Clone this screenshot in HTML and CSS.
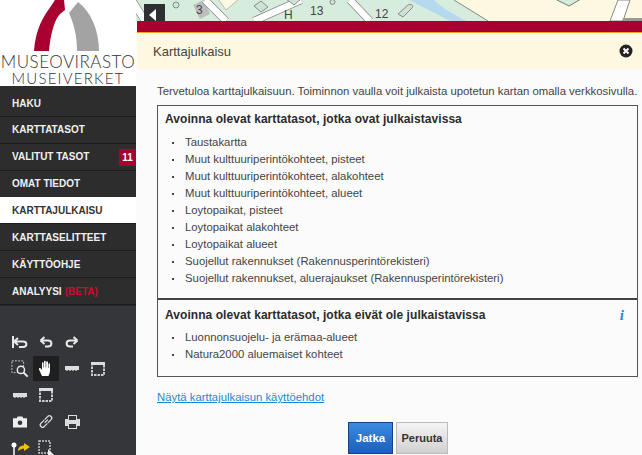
FILE: index.html
```html
<!DOCTYPE html>
<html lang="fi">
<head>
    <meta charset="UTF-8">
    <title>Karttajulkaisu</title>
    <link rel="stylesheet" href="styles.css">
</head>
<body>
    <div class="app">
        <aside class="sidebar">
            <div class="logo">
                <svg class="logo-mark" width="136" height="53" viewBox="0 0 136 53">
                    <path fill="#a8002f" d="M34 51C35 35 40 21 49 9L55 0H64L65 10L60 14L57 18C52 28 50 40 49 51Z"/>
                    <path fill="#a3a3a3" d="M69 13L78 2C91 12 99 30 99 51H77C77 36 74 24 69 13Z"/>
                </svg>
                <div class="logo-name">MUSEOVIRASTO</div>
                <div class="logo-sub">MUSEIVERKET</div>
            </div>
            <nav class="menu">
                <a class="menu-item">HAKU</a>
                <a class="menu-item">KARTTATASOT</a>
                <a class="menu-item">VALITUT TASOT<span class="badge">11</span></a>
                <a class="menu-item">OMAT TIEDOT</a>
                <a class="menu-item active">KARTTAJULKAISU</a>
                <a class="menu-item">KARTTASELITTEET</a>
                <a class="menu-item">KÄYTTÖOHJE</a>
                <a class="menu-item">ANALYYSI <span class="beta">(BETA)</span></a>
            </nav>
            <div class="tools">
                <div class="tool-row">
                    <span class="tool"><svg width="16" height="14" viewBox="0 0 16 14"><path d="M1 1V13M2 6.500H11C15.500 6.500 15.500 12 11 12H7M2 6.500L6 3M2 6.500L6 10" fill="none" stroke="#e8e8e8" stroke-width="2"/></svg></span>
                    <span class="tool"><svg width="14" height="12" viewBox="0 0 14 12"><path d="M2 4.500H9C13.500 4.500 13.500 10.500 9 10.500H6M1.500 4.500L5.500 1M1.500 4.500L5.500 8" fill="none" stroke="#e8e8e8" stroke-width="2"/></svg></span>
                    <span class="tool"><svg width="14" height="12" viewBox="0 0 14 12"><path d="M12 4.500H5C0.500 4.500 0.500 10.500 5 10.500H8M12.500 4.500L8.500 1M12.500 4.500L8.500 8" fill="none" stroke="#e8e8e8" stroke-width="2"/></svg></span>
                </div>
                <div class="tool-row">
                    <span class="tool"><svg width="18" height="18" viewBox="0 0 20 20"><rect x="1" y="1" width="13" height="13" fill="none" stroke="#ddd" stroke-dasharray="2 1.500"/><circle cx="11" cy="11" r="4" fill="#35363a" stroke="#eee" stroke-width="1.600"/><path d="M14 14L18.500 18.500" stroke="#eee" stroke-width="2.200"/></svg></span>
                    <span class="tool on"><svg width="16" height="17" viewBox="0 0 16 17"><path fill="#fff" d="M4 16L1 9.500C.5 8 2 7.500 3 8.500L4 10V3C4 2 5.500 2 5.500 3V7.500H6V1.500C6 .5 7.700 .5 7.700 1.500V7.500H8.200V2C8.200 1 10 1 10 2V8H10.500V4C10.500 3 12 3 12 4V10.500C12 13 11 14.500 10.500 16Z"/></svg></span>
                    <span class="tool"><svg width="14" height="5" viewBox="0 0 14 5"><path fill="#ddd" d="M0 0H14V4H0Z"/><path d="M1 4.500H13" stroke="#999" stroke-dasharray="2 1"/></svg></span>
                    <span class="tool"><svg width="14" height="14" viewBox="0 0 14 14"><rect x="1" y="1" width="12" height="12" fill="none" stroke="#ccc" stroke-width="2" stroke-dasharray="2.500 1"/><path d="M0 0H14V3H0Z" fill="#ddd"/></svg></span>
                </div>
                <div class="tool-row">
                    <span class="tool"><svg width="14" height="5" viewBox="0 0 14 5"><path fill="#ddd" d="M0 0H14V4H0Z"/><path d="M1 4.500H13" stroke="#999" stroke-dasharray="2 1"/></svg></span>
                    <span class="tool"><svg width="14" height="14" viewBox="0 0 14 14"><rect x="1" y="1" width="12" height="12" fill="none" stroke="#ccc" stroke-width="2" stroke-dasharray="2.500 1"/><path d="M0 0H14V3H0Z" fill="#ddd"/></svg></span>
                </div>
                <div class="tool-row">
                    <span class="tool"><svg width="14" height="12" viewBox="0 0 15 12"><path fill="#eee" d="M0 2H4L5 0H10L11 2H15V12H0Z"/><circle cx="7.500" cy="6.800" r="2.500" fill="#35363a"/></svg></span>
                    <span class="tool"><svg width="14" height="15" viewBox="0 0 15 15"><path d="M6 9L9.500 5.500M5.500 6L2 9.500C0 12 3 15 5.500 13L9 9.500M6 5.500L9.500 2C12 0 15 3 13 5.500L9.500 9" fill="none" stroke="#ddd" stroke-width="1.400"/></svg></span>
                    <span class="tool"><svg width="15" height="14" viewBox="0 0 15 14"><path fill="#ddd" d="M3 0H12V4H15V11H12V14H3V11H0V4H3ZM4 1V5H11V1ZM4 9V13H11V9Z"/></svg></span>
                </div>
                <div class="tool-row">
                    <span class="tool"><svg width="20" height="14" viewBox="0 0 20 14"><circle cx="4" cy="4" r="2.500" fill="#fff"/><path d="M4 6V14" stroke="#fff" stroke-width="1.500"/><path fill="#f2c200" d="M8 10C8 6 11 4.500 14 4.500V2L20 6L14 10V7.500C12 7.500 10 8.500 8 10Z"/></svg></span>
                    <span class="tool"><svg width="16" height="16" viewBox="0 0 16 16"><rect x="1" y="1" width="11" height="12" fill="none" stroke="#ccc" stroke-width="1.500" stroke-dasharray="2 1"/><path fill="#eee" d="M10 9L16 15H10Z"/></svg></span>
                </div>
            </div>
        </aside>
        <main class="content">
            <div class="map">
                <svg class="map-art" width="506" height="21" viewBox="0 0 506 21">
                    <rect width="506" height="21" fill="#d6ecdc"/>
                    <path fill="#fdf8e2" d="M318 0H506V21H352Z"/>
                    <path d="M318 0L352 21" stroke="#888" fill="none"/>
                    <path fill="#b5daf0" d="M274 0H298C305 7 318 15 331 21H314C300 13 287 8 274 0Z"/>
                    <path fill="#fdf8e2" stroke="#bbb" d="M82 -1H103L90 10Z"/>
                    <path fill="#bdbdbd" d="M57 5L68 0L74 14L64 19Z"/>
                    <path d="M-4 0L9 21M69 0L90 21M165 0L118 21M214 0L234 21" stroke="#8a8a8a" stroke-width="8" fill="none"/>
                    <path d="M-4 0L9 21M69 0L90 21M165 0L118 21M214 0L234 21" stroke="#fff" stroke-width="6.500" fill="none"/>
                    <path d="M118 6L125 1L132 7L125 12ZM150 -1L158 5L165 -1ZM262 14L272 5C275 3 278 6 276 8L267 17ZM37 5a3 3 0 1 0 6 0a3 3 0 1 0 -6 0ZM194 2a2.500 2.500 0 1 0 5 0a2.500 2.500 0 1 0 -5 0Z" fill="#cfe3d4" stroke="#8b8b8b"/>
                    <path d="M419 -1L433 6L445 -1Z" fill="#d6ecdc" stroke="#777"/>
                    <path d="M482 0L474 21H487L494 0Z" fill="#fff" stroke="#888"/>
                    <path d="M487 18H506V21H486Z" fill="#999"/>
                    <text x="60" y="14" class="map-num">3</text>
                    <text x="174" y="15" class="map-num">13</text>
                    <text x="239" y="18" class="map-num">12</text>
                    <text x="148" y="19" class="map-num">H</text>
                </svg>
                <button class="map-toggle"><span class="arrow"></span></button>
            </div>
            <div class="band"></div>
            <section class="dialog">
                <header class="dialog-head">
                    <h2>Karttajulkaisu</h2>
                    <span class="close">
                        <svg width="14" height="14" viewBox="0 0 14 14"><circle cx="7" cy="7" r="6.500" fill="#222"/><path d="M4.500 4.500L9.500 9.500M9.500 4.500L4.500 9.500" stroke="#fff" stroke-width="2"/></svg>
                    </span>
                </header>
                <div class="dialog-body">
                    <p class="intro">Tervetuloa karttajulkaisuun. Toiminnon vaulla voit julkaista upotetun kartan omalla verkkosivulla.</p>
                    <div class="layer-box">
                        <div class="layer-group first">
                            <h3>Avoinna olevat karttatasot, jotka ovat julkaistavissa</h3>
                            <ul>
                                <li>Taustakartta</li>
                                <li>Muut kulttuuriperintökohteet, pisteet</li>
                                <li>Muut kulttuuriperintökohteet, alakohteet</li>
                                <li>Muut kulttuuriperintökohteet, alueet</li>
                                <li>Loytopaikat, pisteet</li>
                                <li>Loytopaikat alakohteet</li>
                                <li>Loytopaikat alueet</li>
                                <li>Suojellut rakennukset (Rakennusperintörekisteri)</li>
                                <li>Suojellut rakennukset, aluerajaukset (Rakennusperintörekisteri)</li>
                            </ul>
                        </div>
                        <div class="layer-group second">
                            <h3>Avoinna olevat karttatasot, jotka eivät ole julkaistavissa<span class="info">i</span></h3>
                            <ul>
                                <li>Luonnonsuojelu- ja erämaa-alueet</li>
                                <li>Natura2000 aluemaiset kohteet</li>
                            </ul>
                        </div>
                    </div>
                    <a class="terms">Näytä karttajulkaisun käyttöehdot</a>
                    <div class="actions">
                        <button class="btn primary">Jatka</button>
                        <button class="btn">Peruuta</button>
                    </div>
                </div>
            </section>
        </main>
    </div>
</body>
</html>
```
FILE: styles.css
```css
html, body {
    margin: 0;
    padding: 0;
}
body {
    width: 642px;
    height: 455px;
    overflow: hidden;
    font-family: "Liberation Sans", Arial, sans-serif;
    color: #444;
    background-color: #fbfbfb;
}
.app {
    display: flex;
    height: 455px;
}
.sidebar {
    width: 136px;
    flex-shrink: 0;
    background-color: #35363a;
    overflow: hidden;
}
.logo {
    height: 86px;
    background-color: white;
    overflow: hidden;
    color: #333;
    font-family: Lato, "Liberation Sans", sans-serif;
    font-weight: 300;
    text-align: center;
    white-space: nowrap;
}
.logo-mark {
    display: block;
}
.logo-name {
    font-size: 17px;
    line-height: 17px;
    letter-spacing: 0.5px;
}
.logo-sub {
    font-size: 15px;
    line-height: 16px;
    letter-spacing: 1.2px;
}
.menu {
    padding-top: 4px;
    background-color: #2d2d2e;
}
.menu-item {
    display: flex;
    align-items: center;
    gap: 3px;
    height: 26px;
    padding-left: 12px;
    font-size: 10px;
    font-weight: bold;
    color: #f0f0f0;
    border-bottom: 1px solid #1d1d1d;
    margin-bottom: -0.15px;
    position: relative;
}
.menu-item.active {
    background-color: white;
    color: #333;
}
.badge {
    position: absolute;
    right: 0;
    top: 5px;
    width: 17px;
    height: 17px;
    line-height: 17px;
    background-color: #a8002f;
    color: white;
    text-align: center;
}
.beta {
    color: #c8102e;
}
.tools {
    padding: 23px 0 0 7px;
    border-top: 1px solid #27272a;
}
.tool-row {
    display: flex;
    align-items: center;
    height: 26.500px;
}
.tool {
    width: 26px;
    height: 25px;
    display: flex;
    align-items: center;
    justify-content: center;
}
.tool.on {
    background-color: #1f1f20;
}
.content {
    flex: 1;
    display: flex;
    flex-direction: column;
    min-width: 0;
}
.map {
    height: 21px;
    position: relative;
    overflow: hidden;
}
.map-art {
    display: block;
}
.map-num {
    font-family: "Liberation Sans", sans-serif;
    font-size: 12px;
    fill: #444;
}
.map-toggle {
    position: absolute;
    left: 8px;
    top: 4px;
    width: 21px;
    height: 17px;
    padding: 0;
    border: none;
    background-color: #2f3033;
}
.arrow {
    display: block;
    margin: 5px 0 0 5px;
    width: 0;
    height: 0;
    border-top: 6px solid transparent;
    border-bottom: 6px solid transparent;
    border-right: 7px solid white;
}
.band {
    height: 11px;
    margin-left: 1px;
    background-color: #a8002f;
    border-bottom: 1px solid #f0a030;
}
.dialog {
    flex: 1;
    margin-left: 1px;
    display: flex;
    flex-direction: column;
}
.dialog-head {
    height: 36px;
    display: flex;
    align-items: center;
    justify-content: space-between;
    padding: 0 9px 0 16px;
    background-color: #fff8e1;
}
.dialog-head h2 {
    margin: 0;
    font-size: 13px;
    font-weight: normal;
    color: #444;
}
.close {
    display: flex;
}
.dialog-body {
    padding: 15px 4px 0 20px;
}
.intro {
    margin: 0 0 7px;
    font-size: 11.370px;
    line-height: 14px;
    white-space: nowrap;
}
.layer-box {
    border: 1px solid #555;
}
.layer-group h3 {
    margin: 0;
    font-size: 12px;
    line-height: 14px;
    color: #2b2b2b;
    letter-spacing: 0.06px;
    display: flex;
    justify-content: space-between;
    padding: 0 13px 0 7px;
}
.layer-group.first {
    padding: 6px 0 11px;
    border-bottom: 2px solid #444;
}
.layer-group.second {
    padding: 8px 0 13px;
}
.layer-group ul {
    margin: 8px 0 0;
    padding: 0 0 0 27px;
    list-style: none;
}
.layer-group.second ul {
    margin-top: 7px;
}
.layer-group li {
    font-size: 11.350px;
    line-height: 17px;
    position: relative;
}
.layer-group li::before {
    content: "";
    position: absolute;
    left: -13px;
    top: 8px;
    width: 2px;
    height: 2px;
    background-color: #444;
}
.info {
    color: #1e88d8;
    font-family: "Liberation Serif", serif;
    font-style: italic;
    font-weight: bold;
    font-size: 15px;
    line-height: 14px;
}
.terms {
    display: block;
    margin-top: 13px;
    font-size: 11.350px;
    line-height: 14px;
    color: #1a8ad8;
    text-decoration: underline;
}
.actions {
    display: flex;
    gap: 3px;
    margin-top: 18px;
    padding-left: 191px;
}
.btn {
    height: 32px;
    width: 52px;
    padding: 0;
    font-family: "Liberation Sans", sans-serif;
    font-size: 11px;
    font-weight: bold;
    color: #333;
    background: linear-gradient(#f4f4f4, #d0d0d0);
    border: 1px solid #bbb;
}
.btn.primary {
    width: 45px;
    font-size: 11.500px;
    color: white;
    background: linear-gradient(#3a8ae0, #1a5fc0);
    border-color: #14408c;
}
```
